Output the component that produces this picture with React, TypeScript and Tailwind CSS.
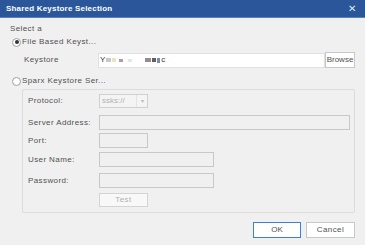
import React from "react";

const font = { fontFamily: '"Liberation Sans", Arial, sans-serif' };

function Radio({ checked }: { checked?: boolean }) {
  return (
    <span className="flex h-[9px] w-[9px] items-center justify-center rounded-full border border-[#a0a0a0] bg-white">
      {checked && <span className="h-[4px] w-[4px] rounded-full bg-[#333]" />}
    </span>
  );
}

function Field({ label, children, className }: { label: string; children: React.ReactNode; className?: string }) {
  return (
    <div className={`flex items-center ${className ?? ""}`}>
      <span className="w-[71px] text-[8px] tracking-[0.4px] text-[#505050]">{label}</span>
      {children}
    </div>
  );
}

export default function App() {
  return (
    <div className="h-[245px] w-[365px] overflow-hidden bg-[#f0f0f0]" style={font}>
      {/* Title bar */}
      <div className="flex h-[18px] items-center justify-between border-b border-[#5b7fb8] bg-[#2b579a] pl-[6px] pr-[9px]">
        <span className="text-[8px] font-semibold tracking-[0.2px] text-white">Shared Keystore Selection</span>
        <span className="text-[10px] leading-none text-[#dfe6f2]">✕</span>
      </div>

      <div className="pl-[10px] pr-[10px]">
        <div className="mt-[5px] flex h-[12px] items-center text-[8px] tracking-[0.4px] text-[#505050]">Select a</div>

        <div className="mt-[1px] flex h-[12px] items-center gap-[1px] pl-[2px]">
          <Radio checked />
          <span className="text-[8px] tracking-[0.4px] text-[#505050]">File Based Keyst...</span>
        </div>

        {/* Keystore row */}
        <div className="mt-[4px] flex h-[16px] items-center">
          <span className="w-[88px] pl-[14px] text-[8px] tracking-[0.4px] text-[#505050]">Keystore</span>
          <div className="flex h-[15px] w-[227px] items-center gap-[1px] border border-[#e0e0e0] bg-white pl-[1px] text-[8px] text-[#333]">
            <span>Y</span>
            <span className="h-[4px] w-[5px] bg-[#c9c9c9]" />
            <span className="h-[4px] w-[4px] bg-[#e8e4c8]" />
            <span className="ml-[2px] h-[3px] w-[4px] bg-[#b89a9a]" />
            <span className="ml-[4px] h-[3px] w-[4px] bg-[#dbe8ee]" />
            <span className="ml-[12px] h-[4px] w-[6px] bg-[#9a8a90]" />
            <span className="h-[4px] w-[4px] bg-[#5e5e66]" />
            <span className="h-[5px] w-[3px] bg-[#7b8ab0]" />
            <span>c</span>
          </div>
          <div className="flex h-[16px] w-[30px] items-center justify-center border border-[#c8c8c8] bg-white text-[8px] text-[#505050]">
            Browse
          </div>
        </div>

        <div className="mt-[7px] flex h-[12px] items-center gap-[1px] pl-[2px]">
          <Radio />
          <span className="text-[8px] tracking-[0.4px] text-[#505050]">Sparx Keystore Ser...</span>
        </div>

        {/* Group box */}
        <div className="ml-[12px] mt-[2px] h-[124px] w-[333px] rounded-[2px] border border-[#dcdcdc] pl-[5px] pt-[4px]">
          <Field label="Protocol:">
            <div className="flex h-[14px] w-[49px] items-center justify-between border border-[#d0d0d0] bg-[#f4f4f4] pl-[2px]">
              <span className="text-[8px] text-[#b0b0b0]">ssks://</span>
              <span className="flex h-full w-[11px] items-center justify-center border-l border-[#e4e4e4] text-[6px] text-[#bbb]">▾</span>
            </div>
          </Field>
          <Field label="Server Address:" className="mt-[7px]">
            <div className="h-[15px] w-[251px] border border-[#c8c8c8] bg-[#f0f0f0]" />
          </Field>
          <Field label="Port:" className="mt-[3px]">
            <div className="h-[15px] w-[49px] border border-[#c8c8c8] bg-[#f0f0f0]" />
          </Field>
          <Field label="User Name:" className="mt-[4px]">
            <div className="h-[15px] w-[115px] border border-[#c8c8c8] bg-[#f0f0f0]" />
          </Field>
          <Field label="Password:" className="mt-[6px]">
            <div className="h-[15px] w-[115px] border border-[#c8c8c8] bg-[#f0f0f0]" />
          </Field>
          <div className="mt-[5px] flex pl-[71px]">
            <div className="flex h-[14px] w-[49px] items-center justify-center border border-[#d4d4d4] bg-[#f8f8f8] text-[8px] tracking-[0.4px] text-[#b0b0b0]">
              Test
            </div>
          </div>
        </div>

        {/* Footer buttons */}
        <div className="mt-[9px] flex justify-end gap-[5px]">
          <div className="flex h-[16px] w-[48px] items-center justify-center border border-[#3c7fd6] bg-white text-[8px] text-[#505050]">
            OK
          </div>
          <div className="flex h-[16px] w-[49px] items-center justify-center border border-[#c8c8c8] bg-white text-[8px] tracking-[0.4px] text-[#505050]">
            Cancel
          </div>
        </div>
      </div>
    </div>
  );
}
